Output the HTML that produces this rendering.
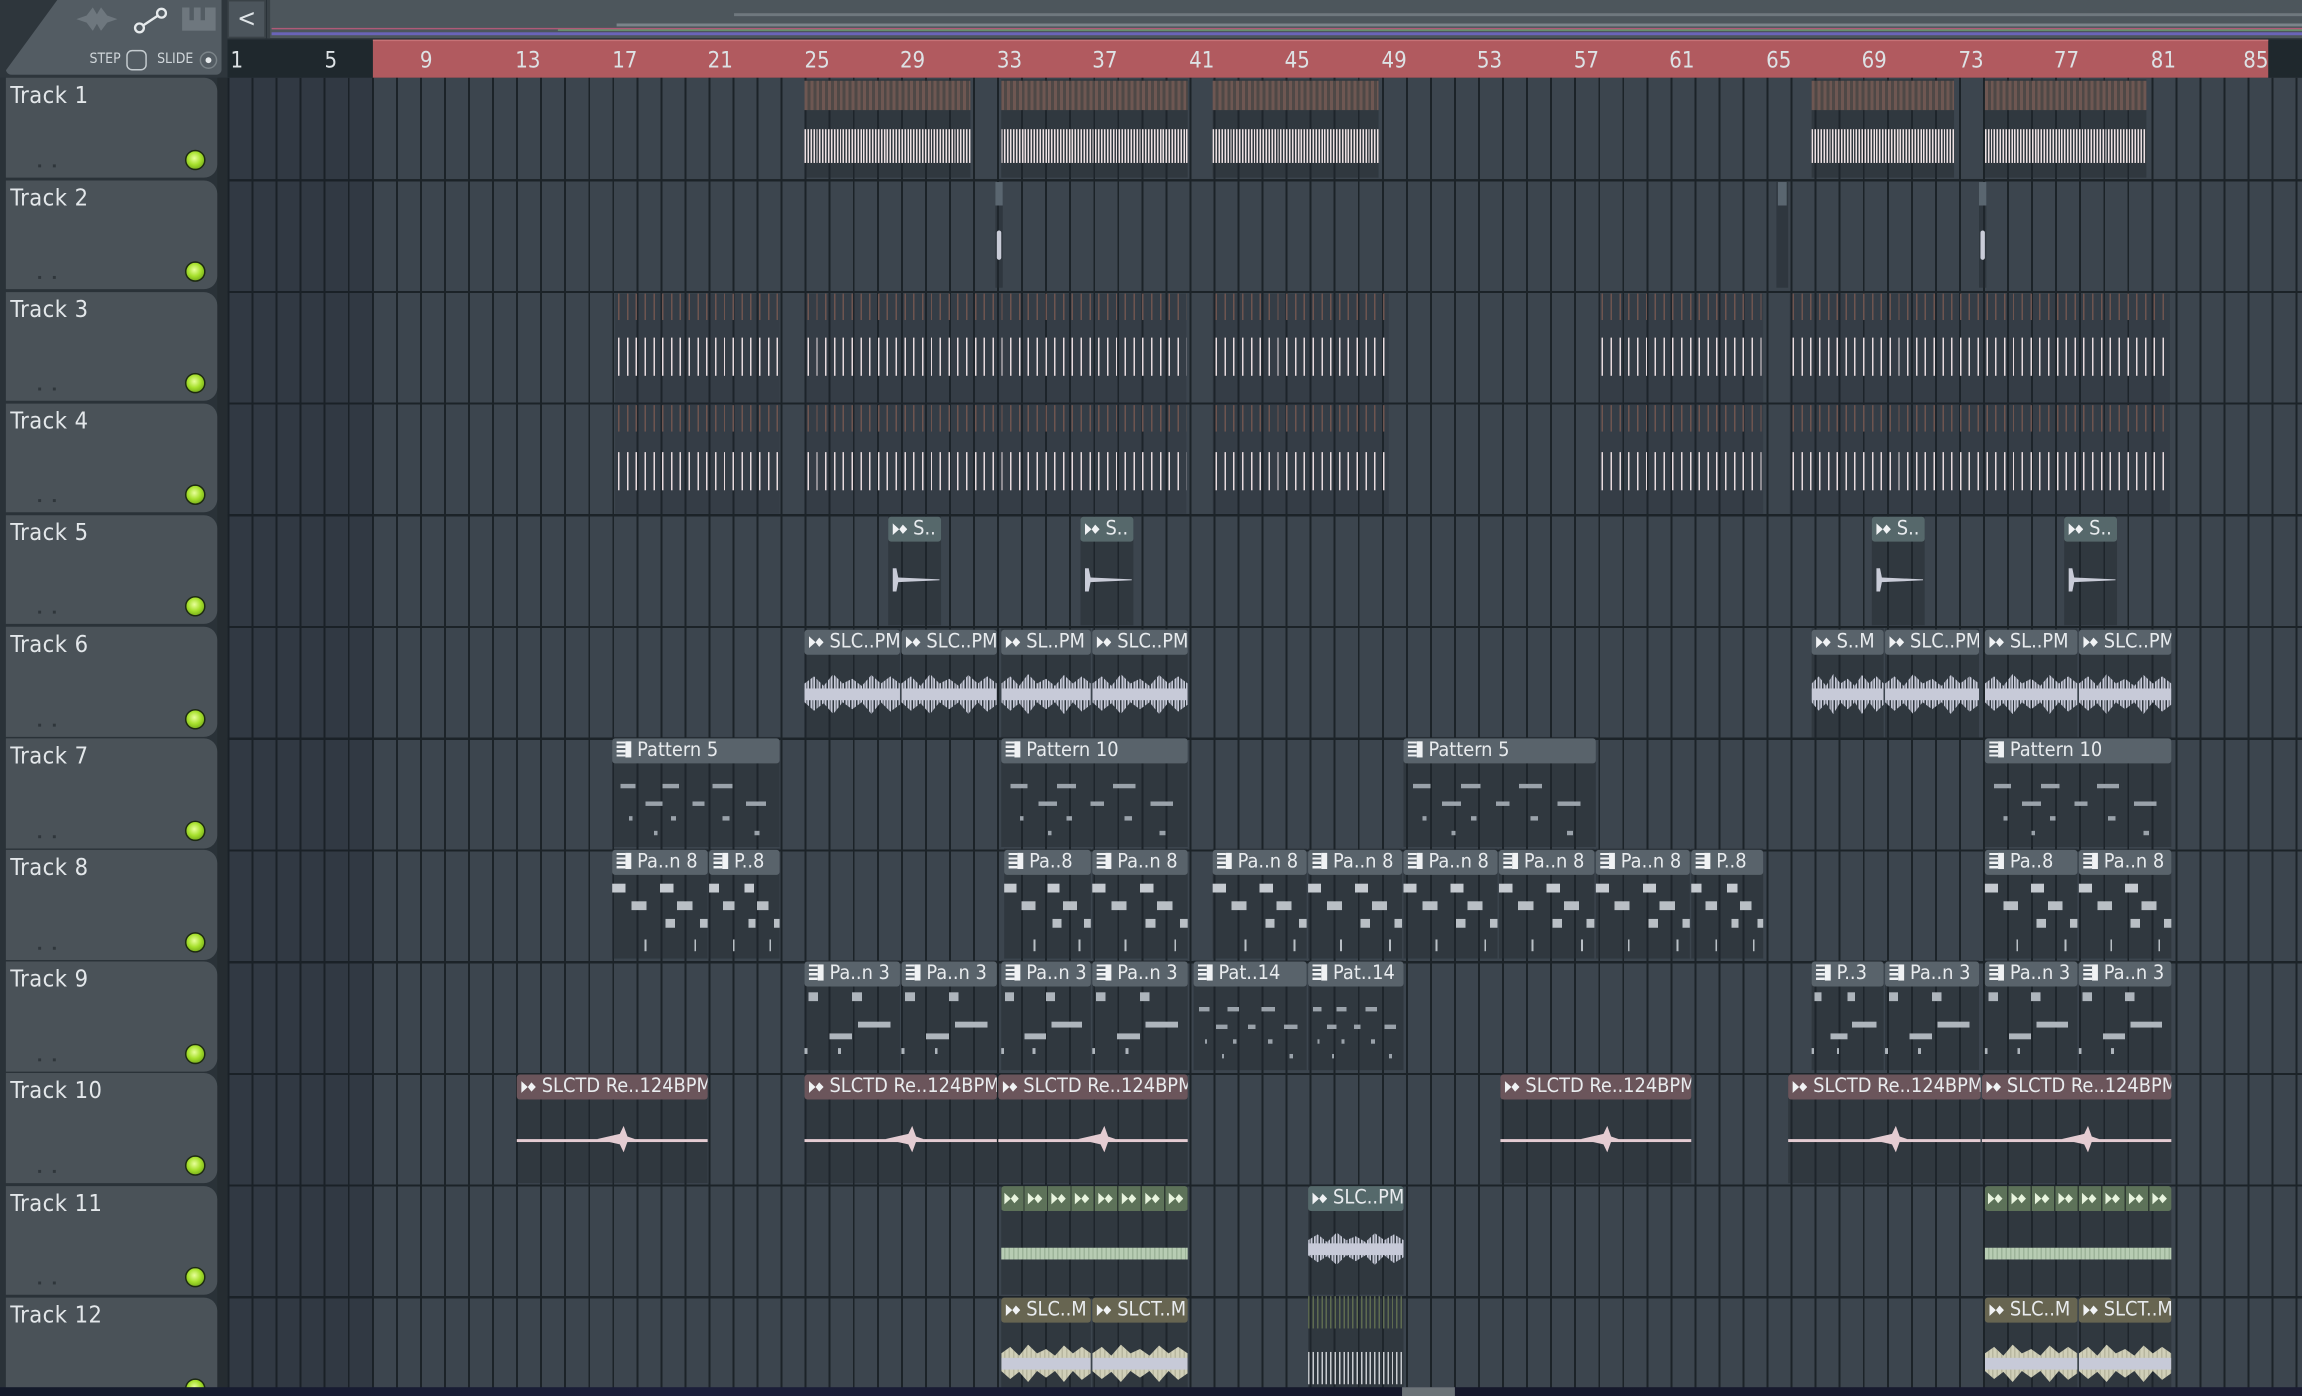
<!DOCTYPE html>
<html><head><meta charset="utf-8"><style>
*{margin:0;padding:0;box-sizing:border-box}
html,body{width:2302px;height:1396px;overflow:hidden;background:#2a3238}
#s{position:absolute;left:0;top:0;width:1568px;height:951px;transform:scale(1.46811,1.46793);transform-origin:0 0;font-family:"Liberation Sans Narrow","DejaVu Sans Condensed","Liberation Sans",sans-serif;overflow:hidden;background:#2a3238}
.abs{position:absolute}
#grid{position:absolute;left:155px;top:53px;width:1413px;height:898px;background-color:#3c454e;
background-image:repeating-linear-gradient(90deg,#1c2328 0 1.3px,transparent 1.3px 16.38px)}
#rows{position:absolute;left:155px;top:121.6px;width:1413px;height:830px;background-image:repeating-linear-gradient(180deg,#1c2328 0 1.5px,transparent 1.5px 76.1px)}
.hd{position:absolute;left:4px;width:144px;height:74.5px;background:#4a5258;border-radius:0 9px 9px 0;color:#e3e7ea;font-size:16px;padding:2px 0 0 3px;letter-spacing:.3px}
.hd i{position:absolute;left:122px;bottom:5px;width:14px;height:14px;border-radius:50%;background:radial-gradient(circle at 45% 40%,#e8ff9a 0,#a6e02c 45%,#5c8f10 100%);border:1.5px solid #1d2a12}
.hd b{position:absolute;left:22px;bottom:7px;width:12px;height:2px;border-left:2px dotted #2f363b;border-right:2px dotted #2f363b;background:none}
.c{position:absolute;height:75px;background:rgba(33,41,47,.45)}
.h{position:absolute;left:0;right:0;top:1px;height:17px;background:#59636b;border-radius:2px;color:#e8ebee;font-size:13.5px;line-height:17px;padding-left:3px;white-space:nowrap;overflow:hidden}
.a{display:inline-block;width:10px;height:9px;background:#f0f2f4;clip-path:polygon(0 5%,45% 50%,70% 15%,100% 50%,70% 85%,45% 50%,0 95%);margin-right:4px;vertical-align:-1px}
.p{display:inline-block;width:10px;height:11px;background:repeating-linear-gradient(180deg,#f0f2f4 0 1.5px,#59636b 1.5px 3px);border-right:4px solid #f0f2f4;margin-right:4px;vertical-align:-1px}
.wv{position:absolute;left:0;right:0;top:28px;height:32px;background:repeating-linear-gradient(90deg,#c7cad8 0 1px,rgba(199,202,216,.5) 1px 2px,#c7cad8 2px 3px,transparent 3px 4px);clip-path:polygon(0 30%,10% 15%,20% 35%,30% 10%,40% 30%,50% 20%,60% 35%,70% 12%,80% 30%,90% 15%,100% 30%,100% 75%,90% 90%,80% 70%,70% 95%,60% 70%,50% 85%,40% 70%,30% 95%,20% 72%,10% 88%,0 70%)}
.wv:after{content:"";position:absolute;left:0;right:0;top:40%;height:8px;background:#c7cad8}
.t1{position:absolute;left:0;right:0;top:1px;height:20px;background:repeating-linear-gradient(90deg,#6e5752 0 2px,#4f4846 2px 4px)}
.t2{position:absolute;left:0;right:0;top:34px;height:23px;background:repeating-linear-gradient(90deg,#ece0e2 0 1px,#3a3f45 1px 2px,#ece0e2 2px 3px,transparent 3px 4px)}
.r1{position:absolute;left:0;right:0;top:0;height:18px;background:repeating-linear-gradient(90deg,transparent 0 2px,#6e5550 2px 3px,transparent 3px 6px)}
.r2{position:absolute;left:0;right:0;top:30px;height:26px;background:repeating-linear-gradient(90deg,transparent 0 2px,#e8dadd 2px 3px,transparent 3px 6px)}
.pn{position:absolute;left:0;right:0;top:24px;height:46px;background:
linear-gradient(90deg,transparent 0 5%,#9aa2aa 5% 14%,transparent 14% 30%,#9aa2aa 30% 40%,transparent 40% 60%,#9aa2aa 60% 72%,transparent 72%) 0 8px/100% 3px no-repeat,
linear-gradient(90deg,transparent 0 20%,#9aa2aa 20% 30%,transparent 30% 48%,#9aa2aa 48% 55%,transparent 55% 80%,#9aa2aa 80% 92%,transparent 92%) 0 20px/100% 3px no-repeat,
linear-gradient(90deg,transparent 0 10%,#9aa2aa 10% 12%,transparent 12% 35%,#9aa2aa 35% 38%,transparent 38% 66%,#9aa2aa 66% 70%,transparent 70%) 0 30px/100% 3px no-repeat,
linear-gradient(90deg,transparent 0 25%,#9aa2aa 25% 27%,transparent 27% 85%,#9aa2aa 85% 88%,transparent 88%) 0 40px/100% 3px no-repeat}
.p8{position:absolute;left:0;right:0;top:22px;height:50px;background:
linear-gradient(90deg,#c5cad0 0 14%,transparent 14% 50%,#c5cad0 50% 64%,transparent 64%) 0 2px/100% 6px no-repeat,
linear-gradient(90deg,transparent 0 20%,#b9bfc5 20% 36%,transparent 36% 68%,#b9bfc5 68% 84%,transparent 84%) 0 14px/100% 6px no-repeat,
linear-gradient(90deg,transparent 0 56%,#b9bfc5 56% 66%,transparent 66% 92%,#b9bfc5 92% 100%) 0 26px/100% 6px no-repeat,
linear-gradient(90deg,transparent 0 34%,#b9bfc5 34% 36%,transparent 36% 86%,#b9bfc5 86% 88%,transparent 88%) 0 40px/100% 8px no-repeat}
.p3{position:absolute;left:0;right:0;top:20px;height:50px;background:
linear-gradient(90deg,transparent 0 4%,#aeb5bc 4% 14%,transparent 14% 50%,#aeb5bc 50% 60%,transparent 60%) 0 2px/100% 6px no-repeat,
linear-gradient(90deg,transparent 0 56%,#aeb5bc 56% 90%,transparent 90%) 0 22px/100% 4px no-repeat,
linear-gradient(90deg,transparent 0 26%,#aeb5bc 26% 50%,transparent 50%) 0 30px/100% 4px no-repeat,
linear-gradient(90deg,#aeb5bc 0 3%,transparent 3% 35%,#aeb5bc 35% 38%,transparent 38%) 0 40px/100% 4px no-repeat}
.pk{position:absolute;left:0;right:0;top:45px;height:1.5px;background:#e4ccd2}
.pk:after{content:"";position:absolute;left:42%;width:20%;top:-9px;height:18px;background:#e4ccd2;clip-path:polygon(0 50%,60% 30%,70% 0,80% 40%,100% 50%,80% 60%,70% 100%,60% 70%)}
.sh{position:absolute;left:3px;top:36px;width:32px;height:16px;background:#c9ccd8;clip-path:polygon(0 0,8% 0,12% 40%,100% 48%,100% 52%,12% 60%,8% 100%,0 100%)}
</style></head><body><div id="s">
<!-- top bar -->
<div class="abs" style="left:0;top:0;width:155px;height:53px;background:#2e363c"></div>
<div class="abs" style="left:4px;top:0;width:147px;height:51px;background:#535c63;clip-path:polygon(35px 0,100% 0,100% 100%,0 100%,0 94%);border-radius:0 0 4px 4px"></div>
<div class="abs" style="left:52px;top:5px;width:28px;height:16px;background:#6e777e;clip-path:polygon(0 50%,25% 35%,40% 0,50% 30%,60% 0,75% 35%,100% 50%,75% 65%,60% 100%,50% 70%,40% 100%,25% 65%)"></div>
<svg class="abs" style="left:90px;top:4px" width="26" height="20"><line x1="5" y1="15" x2="20" y2="5" stroke="#e6eaec" stroke-width="1.6"/><circle cx="5" cy="15" r="3" fill="#535c63" stroke="#e6eaec" stroke-width="1.6"/><circle cx="20" cy="5" r="3" fill="#535c63" stroke="#e6eaec" stroke-width="1.6"/></svg>
<div class="abs" style="left:124px;top:5px;width:23px;height:16px;background:#6e777e;clip-path:polygon(0 0,22% 0,22% 55%,35% 55%,35% 0,55% 0,55% 55%,68% 55%,68% 0,100% 0,100% 100%,0 100%)"></div>
<div class="abs" style="left:61px;top:35px;font-size:9.5px;color:#d0d6da">STEP</div>
<div class="abs" style="left:86px;top:34px;width:14px;height:14px;border:1.5px solid #c5ccd0;border-radius:4px"></div>
<div class="abs" style="left:107px;top:35px;font-size:9.5px;color:#d0d6da">SLIDE</div>
<div class="abs" style="left:136px;top:35px;width:12px;height:12px;border:1.5px solid #7a8388;border-radius:50%"><div style="margin:2.5px;width:4px;height:4px;border-radius:50%;background:#e6eaec"></div></div>
<div class="abs" style="left:155px;top:0;width:26px;height:26px;background:#4c555c;border:1px solid #3a4247;color:#dfe4e7;font-size:17px;text-align:center;line-height:24px">&lt;</div>
<div class="abs" style="left:182px;top:0;width:1386px;height:26px;background:#4d565c;border-left:2px solid #3a4247"></div>
<div class="abs" style="left:185px;top:19px;width:1383px;height:1px;background:#b05a78"></div>
<div class="abs" style="left:185px;top:22px;width:1383px;height:2px;background:#6a64b8"></div>
<div class="abs" style="left:380px;top:20px;width:1188px;height:1px;background:#6b9a70"></div>
<div class="abs" style="left:420px;top:16px;width:1148px;height:2px;background:#7b848a"></div>
<div class="abs" style="left:500px;top:9px;width:1068px;height:2px;background:#6f787e"></div>
<!-- ruler -->
<div class="abs" style="left:155px;top:27px;width:1413px;height:26px;background:#1f282d"></div>
<div class="abs" style="left:254px;top:27px;width:1291px;height:26px;background:#b15a5f;border-top:1px solid #c77276"></div>
<div class="abs" style="left:0;top:27px;width:1568px;height:26px;font-size:15px;line-height:28px;color:#dde2e5">
<span class="abs" style="left:157px">1</span><span class="abs" style="left:221px">5</span><span class="abs" style="left:286px">9</span><span class="abs" style="left:351px">13</span><span class="abs" style="left:417px">17</span><span class="abs" style="left:482px">21</span><span class="abs" style="left:548px">25</span><span class="abs" style="left:613px">29</span><span class="abs" style="left:679px">33</span><span class="abs" style="left:744px">37</span><span class="abs" style="left:810px">41</span><span class="abs" style="left:875px">45</span><span class="abs" style="left:941px">49</span><span class="abs" style="left:1006px">53</span><span class="abs" style="left:1072px">57</span><span class="abs" style="left:1137px">61</span><span class="abs" style="left:1203px">65</span><span class="abs" style="left:1268px">69</span><span class="abs" style="left:1334px">73</span><span class="abs" style="left:1399px">77</span><span class="abs" style="left:1465px">81</span><span class="abs" style="left:1528px">85</span></div>
<!-- grid -->
<div id="grid"></div>
<div id="rows"></div>
<div class="abs" style="left:155px;top:53px;width:99px;height:898px;background:rgba(20,30,38,.28)"></div>
<div class="abs" style="left:148px;top:53px;width:7px;height:898px;background:#252c31"></div>
<!-- headers -->
<div class="hd" style="top:53px;height:68px">Track 1<i></i><b></b></div>
<div class="hd" style="top:122.6px">Track 2<i></i><b></b></div>
<div class="hd" style="top:198.7px">Track 3<i></i><b></b></div>
<div class="hd" style="top:274.8px">Track 4<i></i><b></b></div>
<div class="hd" style="top:350.9px">Track 5<i></i><b></b></div>
<div class="hd" style="top:427px">Track 6<i></i><b></b></div>
<div class="hd" style="top:503.1px">Track 7<i></i><b></b></div>
<div class="hd" style="top:579.2px">Track 8<i></i><b></b></div>
<div class="hd" style="top:655.3px">Track 9<i></i><b></b></div>
<div class="hd" style="top:731.4px">Track 10<i></i><b></b></div>
<div class="hd" style="top:807.5px">Track 11<i></i><b></b></div>
<div class="hd" style="top:883.6px">Track 12<i></i><b></b></div>
<!-- row 1 -->
<div class="c" style="left:548px;top:54px;width:113px;height:67px"><div class="t1"></div><div class="t2"></div></div>
<div class="c" style="left:682px;top:54px;width:127px;height:67px"><div class="t1"></div><div class="t2"></div></div>
<div class="c" style="left:826px;top:54px;width:113px;height:67px"><div class="t1"></div><div class="t2"></div></div>
<div class="c" style="left:1234px;top:54px;width:97px;height:67px"><div class="t1"></div><div class="t2"></div></div>
<div class="c" style="left:1352px;top:54px;width:110px;height:67px"><div class="t1"></div><div class="t2"></div></div>
<!-- row 2 markers -->
<div class="c" style="left:678px;top:124px;width:5px;height:72px;background:rgba(33,41,47,.5)"><div class="abs" style="left:0;top:0;width:5px;height:16px;background:#5a6670"></div><div class="abs" style="left:1px;top:33px;width:3px;height:20px;background:#c9ccd8;border-radius:2px"></div></div>
<div class="c" style="left:1210px;top:124px;width:8px;height:72px;background:rgba(33,41,47,.5)"><div class="abs" style="left:1px;top:0;width:6px;height:16px;background:#5a6670"></div></div>
<div class="c" style="left:1348px;top:124px;width:5px;height:72px;background:rgba(33,41,47,.5)"><div class="abs" style="left:0;top:0;width:5px;height:16px;background:#5a6670"></div><div class="abs" style="left:1px;top:33px;width:3px;height:20px;background:#c9ccd8;border-radius:2px"></div></div>
<!-- rows 3,4 -->
<div class="c" style="left:419px;top:200px;width:112px;height:150px;background:rgba(33,41,47,.25)"><div class="r1"></div><div class="r2"></div><div class="r1" style="top:76px"></div><div class="r2" style="top:108px"></div></div>
<div class="c" style="left:548px;top:200px;width:260px;height:150px;background:rgba(33,41,47,.25)"><div class="r1"></div><div class="r2"></div><div class="r1" style="top:76px"></div><div class="r2" style="top:108px"></div></div>
<div class="c" style="left:826px;top:200px;width:120px;height:150px;background:rgba(33,41,47,.25)"><div class="r1"></div><div class="r2"></div><div class="r1" style="top:76px"></div><div class="r2" style="top:108px"></div></div>
<div class="c" style="left:1089px;top:200px;width:112px;height:150px;background:rgba(33,41,47,.25)"><div class="r1"></div><div class="r2"></div><div class="r1" style="top:76px"></div><div class="r2" style="top:108px"></div></div>
<div class="c" style="left:1219px;top:200px;width:259px;height:150px;background:rgba(33,41,47,.25)"><div class="r1"></div><div class="r2"></div><div class="r1" style="top:76px"></div><div class="r2" style="top:108px"></div></div>
<!-- row 5 -->
<div class="c" style="left:605px;top:351px;width:36px"><div class="h" style="background:#56686b"><span class="a"></span>S..</div><div class="sh"></div></div>
<div class="c" style="left:736px;top:351px;width:36px"><div class="h" style="background:#56686b"><span class="a"></span>S..</div><div class="sh"></div></div>
<div class="c" style="left:1275px;top:351px;width:36px"><div class="h" style="background:#56686b"><span class="a"></span>S..</div><div class="sh"></div></div>
<div class="c" style="left:1406px;top:351px;width:36px"><div class="h" style="background:#56686b"><span class="a"></span>S..</div><div class="sh"></div></div>
<!-- row 6 -->
<div class="c" style="left:548px;top:428px;width:65px"><div class="h"><span class="a"></span>SLC..PM</div><div class="wv"></div></div>
<div class="c" style="left:614px;top:428px;width:65px"><div class="h"><span class="a"></span>SLC..PM</div><div class="wv"></div></div>
<div class="c" style="left:682px;top:428px;width:61px"><div class="h"><span class="a"></span>SL..PM</div><div class="wv"></div></div>
<div class="c" style="left:744px;top:428px;width:65px"><div class="h"><span class="a"></span>SLC..PM</div><div class="wv"></div></div>
<div class="c" style="left:1234px;top:428px;width:49px"><div class="h"><span class="a"></span>S..M</div><div class="wv"></div></div>
<div class="c" style="left:1284px;top:428px;width:64px"><div class="h"><span class="a"></span>SLC..PM</div><div class="wv"></div></div>
<div class="c" style="left:1352px;top:428px;width:63px"><div class="h"><span class="a"></span>SL..PM</div><div class="wv"></div></div>
<div class="c" style="left:1416px;top:428px;width:63px"><div class="h"><span class="a"></span>SLC..PM</div><div class="wv"></div></div>
<!-- row 7 -->
<div class="c" style="left:417px;top:502px;width:114px"><div class="h"><span class="p"></span>Pattern 5</div><div class="pn"></div></div>
<div class="c" style="left:682px;top:502px;width:127px"><div class="h"><span class="p"></span>Pattern 10</div><div class="pn"></div></div>
<div class="c" style="left:956px;top:502px;width:131px"><div class="h"><span class="p"></span>Pattern 5</div><div class="pn"></div></div>
<div class="c" style="left:1352px;top:502px;width:127px"><div class="h"><span class="p"></span>Pattern 10</div><div class="pn"></div></div>
<!-- row 8 -->
<div class="c" style="left:417px;top:578px;width:65px"><div class="h"><span class="p"></span>Pa..n 8</div><div class="p8"></div></div>
<div class="c" style="left:483px;top:578px;width:48px"><div class="h"><span class="p"></span>P..8</div><div class="p8"></div></div>
<div class="c" style="left:684px;top:578px;width:59px"><div class="h"><span class="p"></span>Pa..8</div><div class="p8"></div></div>
<div class="c" style="left:744px;top:578px;width:65px"><div class="h"><span class="p"></span>Pa..n 8</div><div class="p8"></div></div>
<div class="c" style="left:826px;top:578px;width:64px"><div class="h"><span class="p"></span>Pa..n 8</div><div class="p8"></div></div>
<div class="c" style="left:891px;top:578px;width:64px"><div class="h"><span class="p"></span>Pa..n 8</div><div class="p8"></div></div>
<div class="c" style="left:956px;top:578px;width:64px"><div class="h"><span class="p"></span>Pa..n 8</div><div class="p8"></div></div>
<div class="c" style="left:1021px;top:578px;width:65px"><div class="h"><span class="p"></span>Pa..n 8</div><div class="p8"></div></div>
<div class="c" style="left:1087px;top:578px;width:64px"><div class="h"><span class="p"></span>Pa..n 8</div><div class="p8"></div></div>
<div class="c" style="left:1152px;top:578px;width:49px"><div class="h"><span class="p"></span>P..8</div><div class="p8"></div></div>
<div class="c" style="left:1352px;top:578px;width:63px"><div class="h"><span class="p"></span>Pa..8</div><div class="p8"></div></div>
<div class="c" style="left:1416px;top:578px;width:63px"><div class="h"><span class="p"></span>Pa..n 8</div><div class="p8"></div></div>
<!-- row 9 -->
<div class="c" style="left:548px;top:654px;width:65px"><div class="h"><span class="p"></span>Pa..n 3</div><div class="p3"></div></div>
<div class="c" style="left:614px;top:654px;width:65px"><div class="h"><span class="p"></span>Pa..n 3</div><div class="p3"></div></div>
<div class="c" style="left:682px;top:654px;width:61px"><div class="h"><span class="p"></span>Pa..n 3</div><div class="p3"></div></div>
<div class="c" style="left:744px;top:654px;width:65px"><div class="h"><span class="p"></span>Pa..n 3</div><div class="p3"></div></div>
<div class="c" style="left:813px;top:654px;width:77px"><div class="h"><span class="p"></span>Pat..14</div><div class="pn"></div></div>
<div class="c" style="left:891px;top:654px;width:65px"><div class="h"><span class="p"></span>Pat..14</div><div class="pn"></div></div>
<div class="c" style="left:1234px;top:654px;width:49px"><div class="h"><span class="p"></span>P..3</div><div class="p3"></div></div>
<div class="c" style="left:1284px;top:654px;width:64px"><div class="h"><span class="p"></span>Pa..n 3</div><div class="p3"></div></div>
<div class="c" style="left:1352px;top:654px;width:63px"><div class="h"><span class="p"></span>Pa..n 3</div><div class="p3"></div></div>
<div class="c" style="left:1416px;top:654px;width:63px"><div class="h"><span class="p"></span>Pa..n 3</div><div class="p3"></div></div>
<!-- row 10 -->
<div class="c" style="left:352px;top:731px;width:130px"><div class="h" style="background:#6b555b"><span class="a"></span>SLCTD Re..124BPM</div><div class="pk"></div></div>
<div class="c" style="left:548px;top:731px;width:131px"><div class="h" style="background:#6b555b"><span class="a"></span>SLCTD Re..124BPM</div><div class="pk"></div></div>
<div class="c" style="left:680px;top:731px;width:129px"><div class="h" style="background:#6b555b"><span class="a"></span>SLCTD Re..124BPM</div><div class="pk"></div></div>
<div class="c" style="left:1022px;top:731px;width:130px"><div class="h" style="background:#6b555b"><span class="a"></span>SLCTD Re..124BPM</div><div class="pk"></div></div>
<div class="c" style="left:1218px;top:731px;width:131px"><div class="h" style="background:#6b555b"><span class="a"></span>SLCTD Re..124BPM</div><div class="pk"></div></div>
<div class="c" style="left:1350px;top:731px;width:129px"><div class="h" style="background:#6b555b"><span class="a"></span>SLCTD Re..124BPM</div><div class="pk"></div></div>
<!-- row 11 -->
<div class="c" style="left:682px;top:807px;width:127px"><div class="h" style="background:repeating-linear-gradient(90deg,#5d7259 0 15px,#2f3a33 15px 16px);padding-left:2px;letter-spacing:0"><span class="a" style="background:#e8f4de;margin-right:6px"></span><span class="a" style="background:#e8f4de;margin-right:6px"></span><span class="a" style="background:#e8f4de;margin-right:6px"></span><span class="a" style="background:#e8f4de;margin-right:6px"></span><span class="a" style="background:#e8f4de;margin-right:6px"></span><span class="a" style="background:#e8f4de;margin-right:6px"></span><span class="a" style="background:#e8f4de;margin-right:6px"></span><span class="a" style="background:#e8f4de;margin-right:6px"></span></div><div class="abs" style="left:0;right:0;top:43px;height:8px;background:repeating-linear-gradient(90deg,#b7ccb3 0 2px,#9db49a 2px 3px)"></div></div>
<div class="c" style="left:891px;top:807px;width:65px"><div class="h" style="background:#55696b"><span class="a"></span>SLC..PM</div><div class="wv" style="top:30px;height:26px"></div></div>
<div class="c" style="left:1352px;top:807px;width:127px"><div class="h" style="background:repeating-linear-gradient(90deg,#5d7259 0 15px,#2f3a33 15px 16px);padding-left:2px"><span class="a" style="background:#e8f4de;margin-right:6px"></span><span class="a" style="background:#e8f4de;margin-right:6px"></span><span class="a" style="background:#e8f4de;margin-right:6px"></span><span class="a" style="background:#e8f4de;margin-right:6px"></span><span class="a" style="background:#e8f4de;margin-right:6px"></span><span class="a" style="background:#e8f4de;margin-right:6px"></span><span class="a" style="background:#e8f4de;margin-right:6px"></span><span class="a" style="background:#e8f4de;margin-right:6px"></span></div><div class="abs" style="left:0;right:0;top:43px;height:8px;background:repeating-linear-gradient(90deg,#b7ccb3 0 2px,#9db49a 2px 3px)"></div></div>
<!-- row 12 -->
<div class="c" style="left:682px;top:883px;width:61px"><div class="h" style="background:#676551"><span class="a"></span>SLC..M</div><div class="wv" style="top:30px;height:30px;background:repeating-linear-gradient(90deg,#d0cfb8 0 2px,#b8b7a0 2px 3px)"></div></div>
<div class="c" style="left:744px;top:883px;width:65px"><div class="h" style="background:#676551"><span class="a"></span>SLCT..M</div><div class="wv" style="top:30px;height:30px;background:repeating-linear-gradient(90deg,#d0cfb8 0 2px,#b8b7a0 2px 3px)"></div></div>
<div class="c" style="left:891px;top:883px;width:65px"><div class="abs" style="left:0;right:0;top:0;height:22px;background:repeating-linear-gradient(90deg,#5e6b50 0 1px,transparent 1px 3px)"></div><div class="abs" style="left:0;right:0;top:38px;height:22px;background:repeating-linear-gradient(90deg,#c9ccd0 0 1px,transparent 1px 3px)"></div></div>
<div class="c" style="left:1352px;top:883px;width:63px"><div class="h" style="background:#676551"><span class="a"></span>SLC..M</div><div class="wv" style="top:30px;height:30px;background:repeating-linear-gradient(90deg,#d0cfb8 0 2px,#b8b7a0 2px 3px)"></div></div>
<div class="c" style="left:1416px;top:883px;width:63px"><div class="h" style="background:#676551"><span class="a"></span>SLCT..M</div><div class="wv" style="top:30px;height:30px;background:repeating-linear-gradient(90deg,#d0cfb8 0 2px,#b8b7a0 2px 3px)"></div></div>
<!-- bottom strip -->
<div class="abs" style="left:0;top:945px;width:1568px;height:6px;background:linear-gradient(90deg,#141a2a,#1c1f3a 30%,#15182a 60%,#1b1d33)"></div>
<div class="abs" style="left:955px;top:945px;width:36px;height:6px;background:#6c7378"></div>
</div></body></html>
